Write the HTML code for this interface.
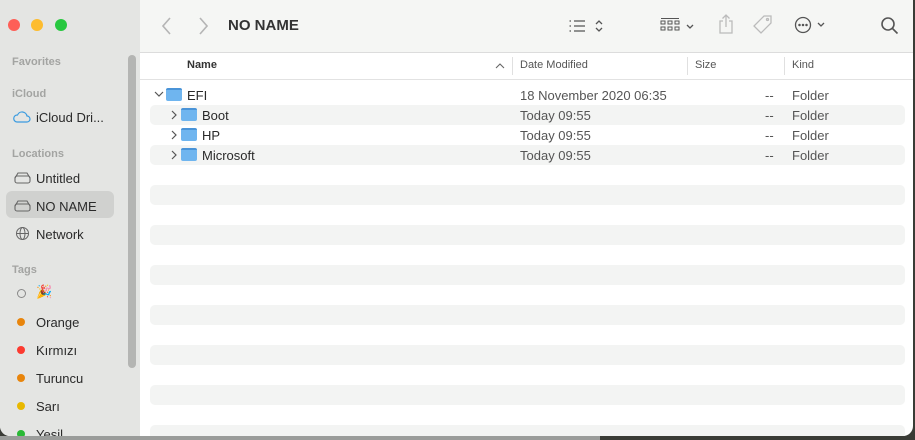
<!DOCTYPE html><html><head><style>
body{margin:0;width:915px;height:440px;overflow:hidden;background:#3a3c36;font-family:"Liberation Sans",sans-serif;position:relative}
.win{position:absolute;left:0;top:0;width:913px;height:436px;background:#fff;border-radius:0 0 10px 10px;overflow:hidden}
.side{position:absolute;left:0;top:0;width:140px;height:436px;background:#e4e5e3}
.tb{position:absolute;left:140px;top:0;right:0;height:52px;background:#f5f6f4;border-bottom:1px solid #dcdcdc}
.dot{position:absolute;top:19px;width:12px;height:12px;border-radius:50%}
.sh{position:absolute;left:12px;font-size:11px;color:#a3a4a2;font-weight:bold}
.si{position:absolute;left:36px;font-size:13px;color:#2a2a2a}
.tag{position:absolute;left:17px;width:8px;height:8px;border-radius:50%}
.hd{position:absolute;top:53px;left:140px;right:0;height:26px;border-bottom:1px solid #e2e2e2;font-size:11px;color:#555}
.hd span{position:absolute;top:6px}
.sep{position:absolute;top:4px;width:1px;height:18px;background:#e0e0e0}
.stripe{position:absolute;left:150px;width:755px;height:20px;background:#f3f4f3;border-radius:5px}
.row{position:absolute;left:0;right:0;height:20px;font-size:13px;color:#2a2a2a}
.row span{position:absolute;top:3px}
.fold{position:absolute;top:3px;width:16px;height:13px;background:#6fb5ef;border-radius:2px;border-top:2px solid #4a94d8;box-sizing:border-box}
</style></head><body>
<div class="win">
<div class="side">
<div class="dot" style="left:8px;background:#fe5f57"></div>
<div class="dot" style="left:31px;background:#fdbc2e"></div>
<div class="dot" style="left:55px;background:#28c840"></div>
<div style="position:absolute;left:128px;top:55px;width:8px;height:313px;border-radius:4px;background:#b4b5b3"></div>
<div class="sh" style="top:56px">Favorites</div>
<div class="sh" style="top:88px">iCloud</div>
<svg style="position:absolute;left:13px;top:110px" width="18" height="13" viewBox="0 0 18 13"><path d="M4 12h10a3 3 0 0 0 0-6 5 5 0 0 0-9.5-1A3.5 3.5 0 0 0 4 12z" fill="none" stroke="#3a9be0" stroke-width="1.2"/></svg>
<div class="si" style="top:110px">iCloud Dri...</div>
<div class="sh" style="top:148px">Locations</div>
<div style="position:absolute;left:6px;top:191px;width:108px;height:27px;border-radius:6px;background:#d0d1cf"></div>
<svg style="position:absolute;left:14px;top:172px" width="17" height="12"><rect x="1" y="4" width="15" height="7" rx="2" fill="none" stroke="#666" stroke-width="1.1"/><path d="M1 6l3-5h9l3 5" fill="none" stroke="#666" stroke-width="1.1"/></svg>
<div class="si" style="top:171px">Untitled</div>
<svg style="position:absolute;left:14px;top:200px" width="17" height="12"><rect x="1" y="4" width="15" height="7" rx="2" fill="none" stroke="#666" stroke-width="1.1"/><path d="M1 6l3-5h9l3 5" fill="none" stroke="#666" stroke-width="1.1"/></svg>
<div class="si" style="top:199px">NO NAME</div>
<svg style="position:absolute;left:15px;top:226px" width="15" height="15"><circle cx="7.5" cy="7.5" r="6" fill="none" stroke="#666"/><ellipse cx="7.5" cy="7.5" rx="2.5" ry="6" fill="none" stroke="#666"/><path d="M1.5 7.5h12" stroke="#666"/></svg>
<div class="si" style="top:227px">Network</div>
<div class="sh" style="top:264px">Tags</div>
<div class="tag" style="top:289px;border:1px solid #888;box-sizing:border-box;width:9px;height:9px"></div>
<div style="position:absolute;left:36px;top:284px;font-size:13px">🎉</div>
<div class="tag" style="top:318px;background:#e8850c"></div><div class="si" style="top:315px">Orange</div>
<div class="tag" style="top:346px;background:#fc3b30"></div><div class="si" style="top:343px">Kırmızı</div>
<div class="tag" style="top:374px;background:#e8850c"></div><div class="si" style="top:371px">Turuncu</div>
<div class="tag" style="top:402px;background:#e8b800"></div><div class="si" style="top:399px">Sarı</div>
<div class="tag" style="top:430px;background:#29b935"></div><div class="si" style="top:427px">Yesil</div>
</div>
<div class="tb">
<svg style="position:absolute;left:22px;top:17px" width="10" height="18"><path d="M8 1L1 9l7 8" fill="none" stroke="#b5b5b5" stroke-width="1.6"/></svg>
<svg style="position:absolute;left:58px;top:17px" width="10" height="18"><path d="M2 1l7 8-7 8" fill="none" stroke="#b5b5b5" stroke-width="1.6"/></svg>
<div style="position:absolute;left:88px;top:17px;font-size:15px;font-weight:bold;color:#333">NO NAME</div>
<svg style="position:absolute;left:428px;top:17px" width="36" height="18" stroke="#555" fill="none" stroke-width="1.3"><path d="M6 4h11M6 9h11M6 14h11M1.5 4h1.5M1.5 9h1.5M1.5 14h1.5"/><path d="M28 7l3-3 3 3M28 11l3 3 3-3"/></svg>
<svg style="position:absolute;left:520px;top:17px" width="36" height="16" stroke="#555" fill="none" stroke-width="1"><path d="M1 1.5h18"/><rect x="1" y="4" width="4" height="3"/><rect x="8" y="4" width="4" height="3"/><rect x="15" y="4" width="4" height="3"/><rect x="1" y="10" width="4" height="3"/><rect x="8" y="10" width="4" height="3"/><rect x="15" y="10" width="4" height="3"/><path d="M27 8l3 3 3-3" stroke-width="1.3"/></svg>
<svg style="position:absolute;left:578px;top:13px" width="16" height="22" stroke="#bbb" fill="none" stroke-width="1.3"><path d="M5 8H2v12h12V8h-3M8 14V2M4.5 5.5L8 2l3.5 3.5"/></svg>
<svg style="position:absolute;left:612px;top:14px" width="22" height="22" stroke="#bbb" fill="none" stroke-width="1.3"><path d="M12 2h7v7L9 19 2 12z"/><circle cx="15.5" cy="5.5" r="1"/></svg>
<svg style="position:absolute;left:654px;top:16px" width="36" height="20" stroke="#555" fill="none" stroke-width="1.3"><circle cx="9" cy="9" r="7.5"/><circle cx="5.5" cy="9" r=".6" fill="#555"/><circle cx="9" cy="9" r=".6" fill="#555"/><circle cx="12.5" cy="9" r=".6" fill="#555"/><path d="M24 7l3 3 3-3"/></svg>
<svg style="position:absolute;left:740px;top:16px" width="20" height="20" stroke="#555" fill="none" stroke-width="1.6"><circle cx="8" cy="8" r="6"/><path d="M12.5 12.5l5 5"/></svg>
</div>
<div class="hd">
<span style="left:47px;font-weight:bold;color:#333">Name</span>
<svg style="position:absolute;left:355px;top:9px" width="10" height="7"><path d="M1 6l4-4 4 4" fill="none" stroke="#666" stroke-width="1.1"/></svg>
<div class="sep" style="left:372px"></div>
<span style="left:380px">Date Modified</span>
<div class="sep" style="left:547px"></div>
<span style="left:555px">Size</span>
<div class="sep" style="left:644px"></div>
<span style="left:652px">Kind</span>
</div>
<div class="stripe" style="top:105px"></div>
<div class="stripe" style="top:145px"></div>
<div class="stripe" style="top:185px"></div>
<div class="stripe" style="top:225px"></div>
<div class="stripe" style="top:265px"></div>
<div class="stripe" style="top:305px"></div>
<div class="stripe" style="top:345px"></div>
<div class="stripe" style="top:385px"></div>
<div class="stripe" style="top:425px"></div>
<div class="row" style="top:85px"><svg style="position:absolute;left:154px;top:6px" width="10" height="7"><path d="M1 1l4 4 4-4" fill="none" stroke="#555" stroke-width="1.2"/></svg><div class="fold" style="left:166px"></div><span style="left:187px">EFI</span><span style="left:520px;color:#555">18 November 2020 06:35</span><span style="left:765px;color:#555">--</span><span style="left:792px;color:#555">Folder</span></div>
<div class="row" style="top:105px"><svg style="position:absolute;left:171px;top:5px" width="7" height="10"><path d="M1 1l4 4-4 4" fill="none" stroke="#555" stroke-width="1.2"/></svg><div class="fold" style="left:181px"></div><span style="left:202px">Boot</span><span style="left:520px;color:#555">Today 09:55</span><span style="left:765px;color:#555">--</span><span style="left:792px;color:#555">Folder</span></div>
<div class="row" style="top:125px"><svg style="position:absolute;left:171px;top:5px" width="7" height="10"><path d="M1 1l4 4-4 4" fill="none" stroke="#555" stroke-width="1.2"/></svg><div class="fold" style="left:181px"></div><span style="left:202px">HP</span><span style="left:520px;color:#555">Today 09:55</span><span style="left:765px;color:#555">--</span><span style="left:792px;color:#555">Folder</span></div>
<div class="row" style="top:145px"><svg style="position:absolute;left:171px;top:5px" width="7" height="10"><path d="M1 1l4 4-4 4" fill="none" stroke="#555" stroke-width="1.2"/></svg><div class="fold" style="left:181px"></div><span style="left:202px">Microsoft</span><span style="left:520px;color:#555">Today 09:55</span><span style="left:765px;color:#555">--</span><span style="left:792px;color:#555">Folder</span></div>
</div>
<div style="position:absolute;left:0;top:436px;width:600px;height:4px;background:#9a9c9a"></div>
</body></html>
